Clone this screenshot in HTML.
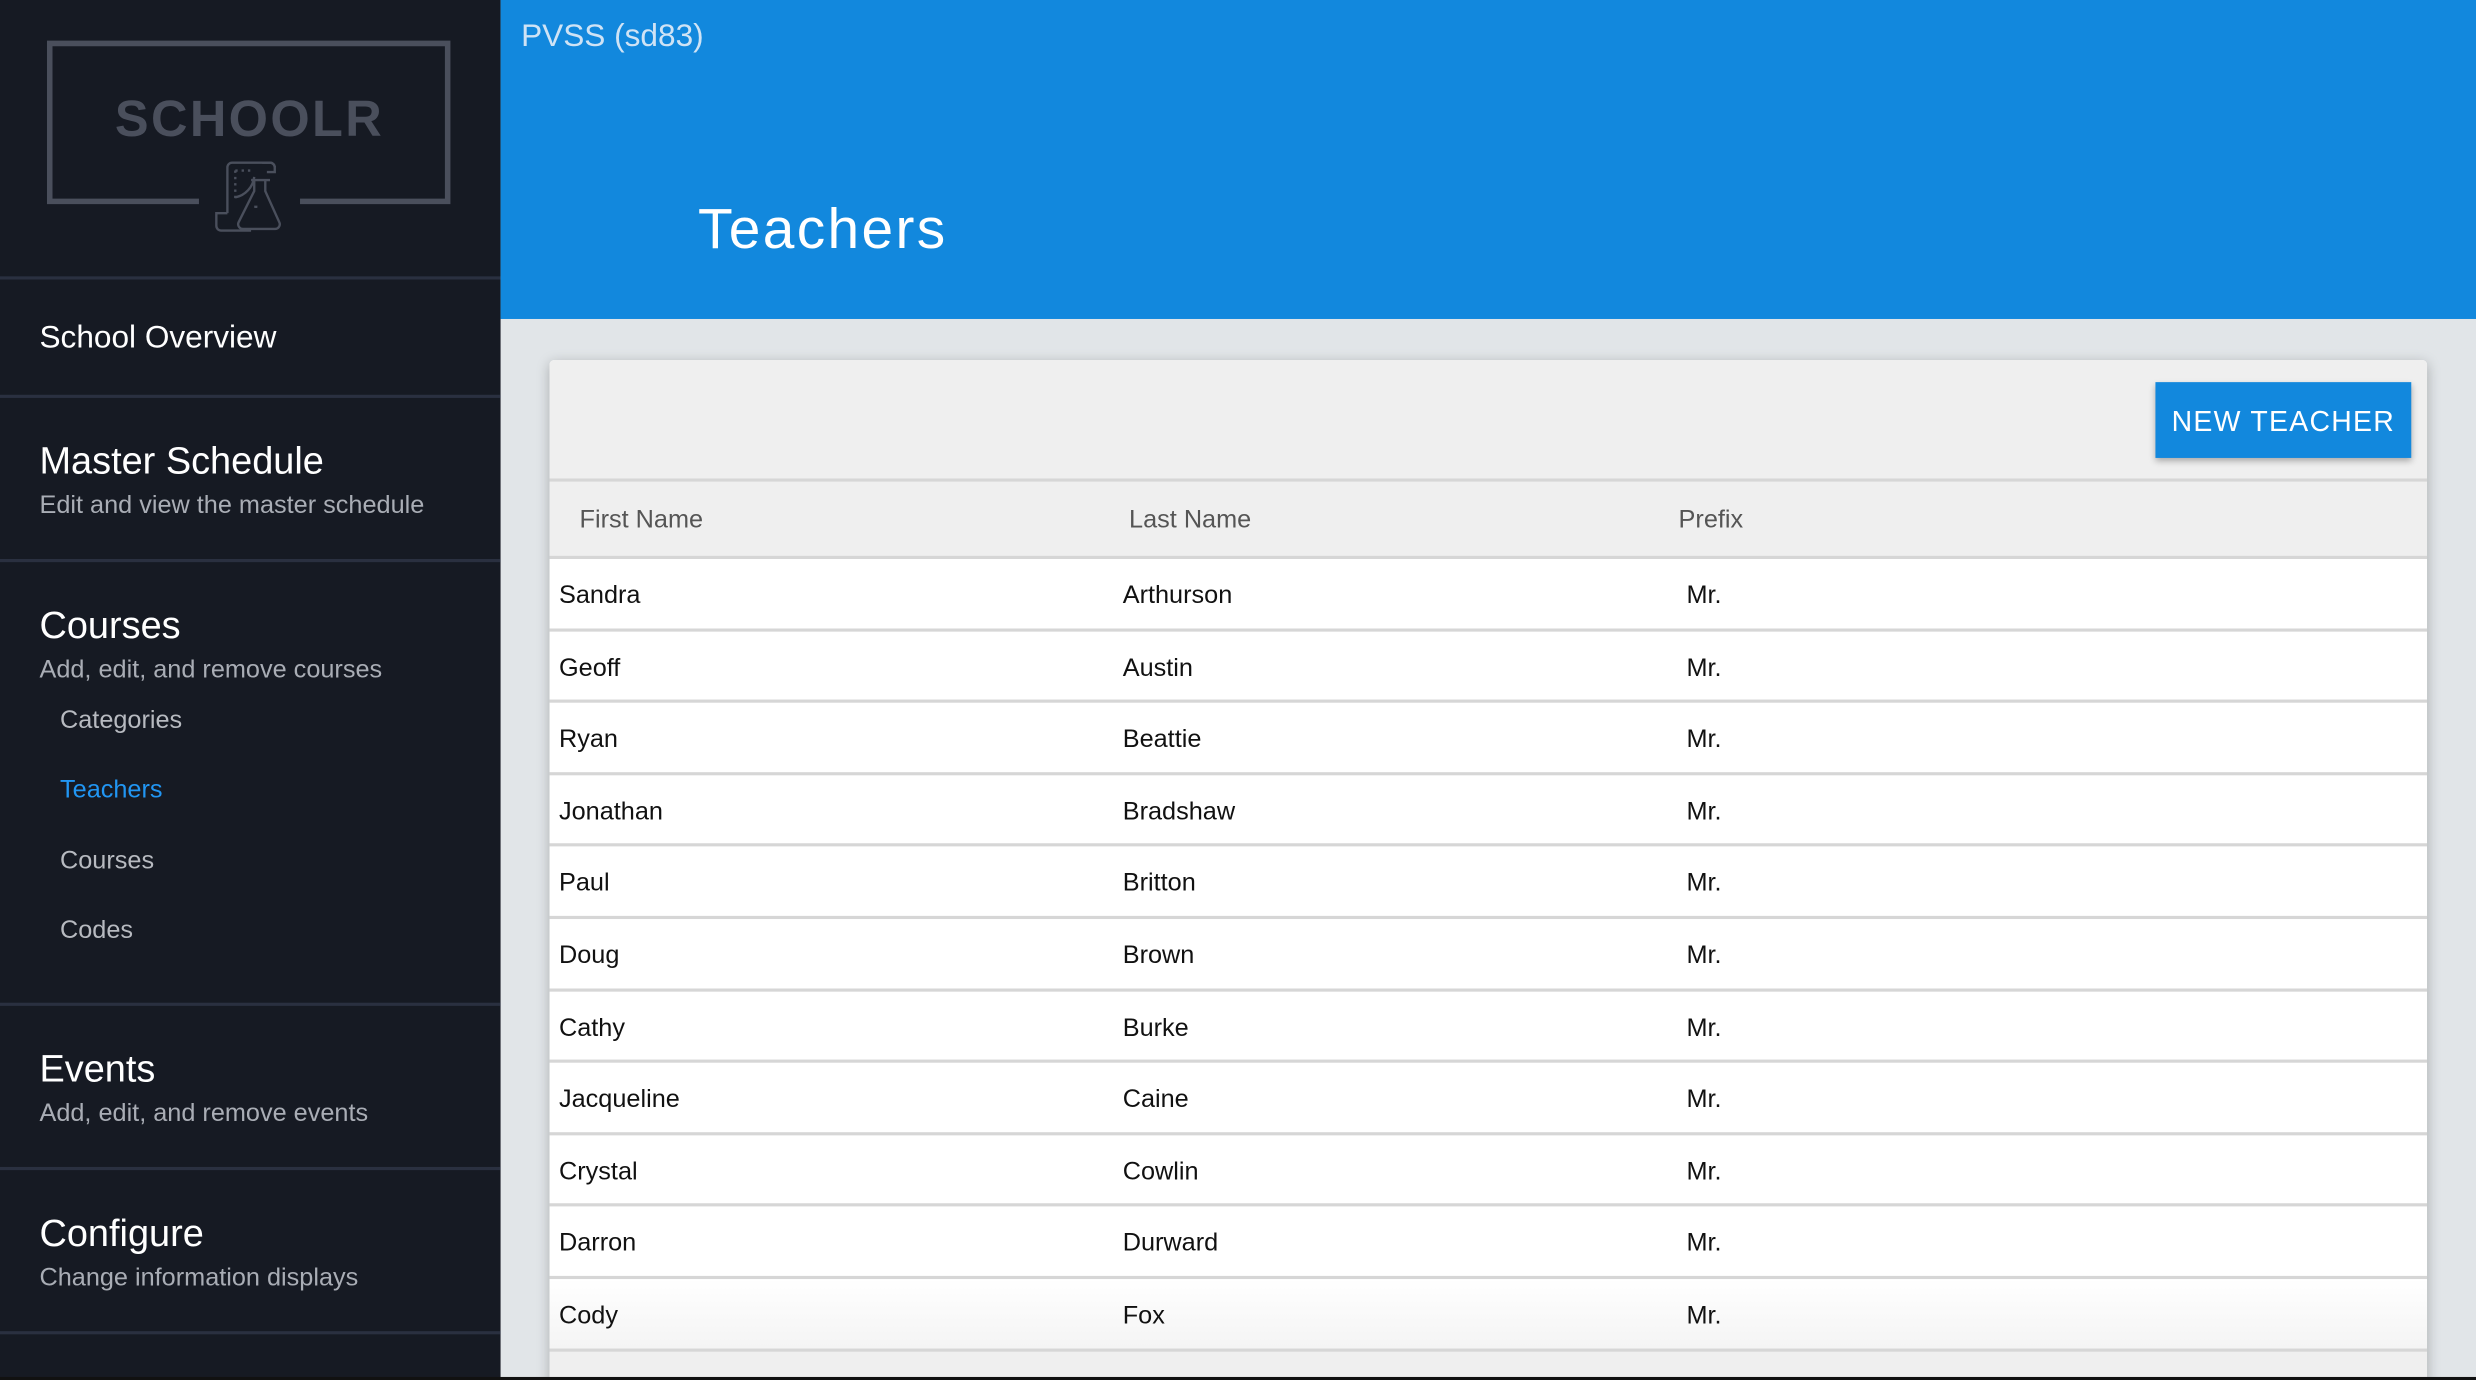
<!DOCTYPE html>
<html><head><meta charset="utf-8"><style>
html,body{margin:0;padding:0;width:2476px;height:1380px;overflow:hidden;background:#111;}
#w{position:absolute;left:0;top:0;width:1568px;height:874px;transform:scale(1.57908);transform-origin:0 0;font-family:"Liberation Sans",sans-serif;overflow:hidden;background:#e1e5e8;}
.sb{position:absolute;left:0;top:0;width:317px;height:874px;background:#161a23;}
.sep{position:absolute;left:0;width:317px;height:2px;background:#2a3040;}
.t{position:absolute;white-space:nowrap;}
.h{color:#fff;font-size:24px;}
.s{color:#a9adb5;font-size:16px;}
.i{color:#b7bac0;font-size:16px;left:38px;}
.hdr{position:absolute;left:317px;top:0;width:1251px;height:202px;background:#1288dd;}
.card{position:absolute;left:348px;top:228px;width:1189px;height:660px;background:#fff;box-shadow:0 2px 8px rgba(0,0,0,.25);border-radius:3px 3px 0 0;overflow:hidden;}
.row{position:absolute;left:0;width:1189px;height:44px;border-top:2px solid #d6d6d6;font-size:16px;color:#111;}
.row span{position:absolute;top:15px;}
</style></head><body><div id="w">
<div class="sb">
<svg width="317" height="175" style="position:absolute;left:0;top:0">
<path d="M126 127.5H31.5V27.5H283.5V127.5H190" fill="none" stroke="#4a4f5c" stroke-width="3.5"/>
<text x="158" y="86" text-anchor="middle" font-family="Liberation Sans" font-weight="bold" font-size="32" letter-spacing="1.5" fill="#4a4f5c">SCHOOLR</text>
<g fill="none" stroke="#4a4f5c" stroke-width="1.5">
<path d="M144 136V170" transform="translate(0,-34)" stroke="none"/>
<path d="M144 135V106a3 3 0 0 1 3-3h24a3 3 0 0 1 3 3v3h-5"/>
<path d="M166 103h5a3 3 0 0 1 3 3"/>
<path d="M144 135h-7v8a3 3 0 0 0 3 3h19"/>
<path d="M161 114v7l-10 20a3 3 0 0 0 3 4h20a3 3 0 0 0 3-4l-9-20v-7"/>
<path d="M159 114h12"/>
<path d="M161 131a14 14 0 0 1 2 0" />
<path d="M149 108v20" stroke-dasharray="1.5 2.5"/>
<path d="M149 108h12" stroke-dasharray="1.5 2.5"/>
<path d="M149 125a15 15 0 0 0 12-13" />
</g></svg>
<div class="sep" style="top:175px"></div>
<div class="t" style="left:25px;top:203px;color:#fff;font-size:20px">School Overview</div>
<div class="sep" style="top:250px"></div>
<div class="t h" style="left:25px;top:279px">Master Schedule</div>
<div class="t s" style="left:25px;top:312px">Edit and view the master schedule</div>
<div class="sep" style="top:354px"></div>
<div class="t h" style="left:25px;top:383px">Courses</div>
<div class="t s" style="left:25px;top:416px">Add, edit, and remove courses</div>
<div class="t i" style="top:448px">Categories</div>
<div class="t i" style="top:492px;color:#2196f3">Teachers</div>
<div class="t i" style="top:537px">Courses</div>
<div class="t i" style="top:581px">Codes</div>
<div class="sep" style="top:635px"></div>
<div class="t h" style="left:25px;top:664px">Events</div>
<div class="t s" style="left:25px;top:697px">Add, edit, and remove events</div>
<div class="sep" style="top:739px"></div>
<div class="t h" style="left:25px;top:768px">Configure</div>
<div class="t s" style="left:25px;top:801px">Change information displays</div>
<div class="sep" style="top:843px"></div>
</div>
<div class="hdr">
<div class="t" style="left:13px;top:12px;font-size:20px;color:#cfe3f5">PVSS (sd83)</div>
<div class="t" style="left:125px;top:124px;font-size:36px;color:#fff;letter-spacing:1.5px">Teachers</div>
</div>
<div class="card">
<div style="position:absolute;left:0;top:0;width:1189px;height:75px;background:#efefef"></div>
<div style="position:absolute;left:1017px;top:14px;width:162px;height:48px;background:#1288dd;box-shadow:0 2px 4px rgba(0,0,0,.3);color:#fff;font-size:18px;letter-spacing:0.8px;line-height:50px;text-align:center">NEW TEACHER</div>
<div style="position:absolute;left:0;top:75px;width:1189px;height:49px;background:#efefef;border-top:2px solid #d6d6d6;font-size:16px;color:#555">
<span style="position:absolute;left:19px;top:16px">First Name</span><span style="position:absolute;left:367px;top:16px">Last Name</span><span style="position:absolute;left:715px;top:16px">Prefix</span></div>
<div class="row" style="top:124px"><span style="left:6px">Sandra</span><span style="left:363px">Arthurson</span><span style="left:720px">Mr.</span></div>
<div class="row" style="top:170px"><span style="left:6px">Geoff</span><span style="left:363px">Austin</span><span style="left:720px">Mr.</span></div>
<div class="row" style="top:215px"><span style="left:6px">Ryan</span><span style="left:363px">Beattie</span><span style="left:720px">Mr.</span></div>
<div class="row" style="top:261px"><span style="left:6px">Jonathan</span><span style="left:363px">Bradshaw</span><span style="left:720px">Mr.</span></div>
<div class="row" style="top:306px"><span style="left:6px">Paul</span><span style="left:363px">Britton</span><span style="left:720px">Mr.</span></div>
<div class="row" style="top:352px"><span style="left:6px">Doug</span><span style="left:363px">Brown</span><span style="left:720px">Mr.</span></div>
<div class="row" style="top:398px"><span style="left:6px">Cathy</span><span style="left:363px">Burke</span><span style="left:720px">Mr.</span></div>
<div class="row" style="top:443px"><span style="left:6px">Jacqueline</span><span style="left:363px">Caine</span><span style="left:720px">Mr.</span></div>
<div class="row" style="top:489px"><span style="left:6px">Crystal</span><span style="left:363px">Cowlin</span><span style="left:720px">Mr.</span></div>
<div class="row" style="top:534px"><span style="left:6px">Darron</span><span style="left:363px">Durward</span><span style="left:720px">Mr.</span></div>
<div class="row" style="top:580px;background:linear-gradient(#fff,#f4f4f4)"><span style="left:6px">Cody</span><span style="left:363px">Fox</span><span style="left:720px">Mr.</span></div>
<div class="row" style="top:626px;background:#efefef"></div>
</div>
<div style="position:absolute;left:0;top:872px;width:1568px;height:3px;background:#111"></div>
</div></body></html>
